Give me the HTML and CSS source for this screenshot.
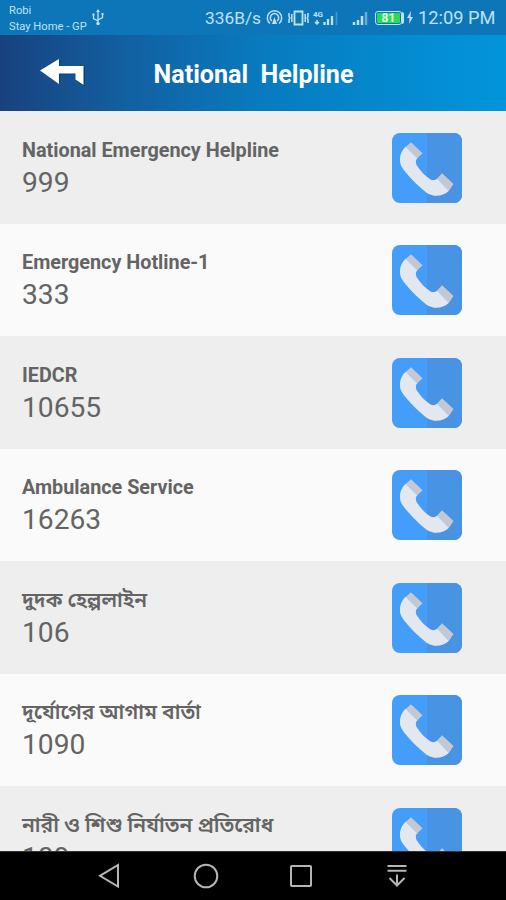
FILE: index.html
```
<!DOCTYPE html>
<html lang="en">
<head>
<meta charset="utf-8">
<title>National Helpline</title>
<link rel="stylesheet" href="styles.css">
</head>
<body>
<svg class="defs" width="0" height="0" aria-hidden="true">
  <symbol id="phone" viewBox="0 0 70 70">
    <rect width="70" height="70" rx="8" fill="#459dfa"/>
    <path d="M35 0h27a8 8 0 0 1 8 8v54a8 8 0 0 1-8 8H35z" fill="#4893e3"/>
    <path d="M14 13.500C8.500 18 6.500 26 9 32.500C12 39 27 54 35 60C42 64.500 51 63.500 57 57.700L45.300 45.500C43 47.500 41 47.500 38.500 46.500C33 43 28.500 38 24.500 32C23.500 29 23.500 27 25.500 25Z" fill="#e3e7ef"/>
    <path d="M19 9.300L30.500 20.300 25.200 25.500 13.700 14ZM50 40.300L61.500 51 57 57.700 45 45.700Z" fill="#c3c9d4"/>
  </symbol>
</svg>
<div class="screen">
  <header class="status">
    <div class="carrier"><span>Robi</span><span>Stay Home - GP</span></div>
    <svg class="usb" width="12" height="17" viewBox="0 0 12 17" fill="none" stroke="#bfe0f6" stroke-width="1.300"><path d="M6 2v12M1.500 6v3.500L6 12M10.500 5.500v3L6 11"/><path d="M6 0l2 3H4zM0.500 4.500h2v2h-2zM9.500 4h2v2h-2z" fill="#bfe0f6" stroke="none"/><circle cx="6" cy="14.500" r="1.700" fill="#bfe0f6" stroke="none"/></svg>
    <span class="speed">336B/s</span>
    <svg class="icons" width="74" height="18" viewBox="0 0 74 18" fill="none" stroke="#bfe0f6" stroke-width="1.500">
      <path d="M4 14.500A7.200 7.200 0 1 1 13 14.500M5.800 12A4.200 4.200 0 1 1 11.200 12"/><path d="M8.500 8l2.500 7H6z" fill="#bfe0f6" stroke="none"/>
      <path d="M28.500 2.500h8v13h-8z" stroke-width="1.800"/><path d="M25.800 5v8M39.200 5v8M23 4v3.500l.8 1.500-.8 1.500V14M42 4v3.500L41.200 9l.8 1.500V14"/>
      <path d="M58.500 13v3M62 10v6M66 7v9" stroke-width="2.300"/><path d="M70.500 3v13" stroke="#3f98d1" stroke-width="1.700"/>
      <path d="M51 11v4M49 13l2 2 2-2"/>
      <text x="47" y="8" class="tiny">4G</text>
    </svg>
    <svg class="signal" width="17" height="18" viewBox="0 0 17 18" fill="none" stroke="#bfe0f6" stroke-width="2.500"><path d="M2 13v3M6 11v5M10 7v9"/><path d="M14 3v13" stroke="#62aedd"/></svg>
    <div class="battery"><span>81</span></div>
    <svg class="bolt" width="6" height="13" viewBox="0 0 6 13"><path d="M4 0L0 7h2.500L2 13l4-7H3.500z" fill="#bfe0f6"/></svg>
    <span class="clock">12:09 PM</span>
  </header>
  <div class="toolbar">
    <svg class="back" width="50" height="34" viewBox="0 0 50 34"><path d="M4 15.500L23 3.500v7h25v20l-8-5v-7H23v8z" fill="#0a3c83"/><path d="M3 14.500L22 3v7h24.500v19l-8-5.500v-6H22V28z" fill="#fff"/></svg>
    <h1>National&nbsp; Helpline</h1>
  </div>
  <main class="list">
    <div class="row"><div><h2>National Emergency Helpline</h2><p>999</p></div><svg class="call"><use href="#phone"/></svg></div>
    <div class="row"><div><h2>Emergency Hotline-1</h2><p>333</p></div><svg class="call"><use href="#phone"/></svg></div>
    <div class="row"><div><h2>IEDCR</h2><p>10655</p></div><svg class="call"><use href="#phone"/></svg></div>
    <div class="row"><div><h2>Ambulance Service</h2><p>16263</p></div><svg class="call"><use href="#phone"/></svg></div>
    <div class="row"><div><h2 class="bn" lang="bn">দুদক হেল্পলাইন</h2><p>106</p></div><svg class="call"><use href="#phone"/></svg></div>
    <div class="row"><div><h2 class="bn" lang="bn">দূর্যোগের আগাম বার্তা</h2><p>1090</p></div><svg class="call"><use href="#phone"/></svg></div>
    <div class="row"><div><h2 class="bn" lang="bn">নারী ও শিশু নির্যাতন প্রতিরোধ</h2><p>109</p></div><svg class="call"><use href="#phone"/></svg></div>
  </main>
  <nav class="nav">
    <svg viewBox="0 0 28 28"><path d="M22 3v21.500L4 13.800z"/></svg>
    <svg viewBox="0 0 28 28"><circle cx="14" cy="14" r="11.300"/></svg>
    <svg viewBox="0 0 28 28"><rect x="4" y="4" width="20" height="20" rx="1"/></svg>
    <svg viewBox="0 0 28 28"><path d="M4.500 4h19M4.500 8.800h19M14 12.500V23M6.500 16l7.500 7.500 7.500-7.500"/></svg>
  </nav>
</div>
</body>
</html>
```
FILE: styles.css
```
* { box-sizing: border-box; margin: 0; padding: 0; }
body { font-family: Roboto, "Noto Sans", "Noto Sans Bengali", sans-serif; overflow: hidden; }
.defs { display: block; width: 0; height: 0; }
.screen { width: 506px; height: 900px; display: flex; flex-direction: column; overflow: hidden; }
.status { height: 35px; flex: none; display: flex; align-items: center; background: #0c76b8; color: #bfe0f6; padding-left: 9px; white-space: nowrap; }
.carrier { display: flex; flex-direction: column; width: 79px; font-size: 11.2px; line-height: 16px; padding-top: 3px; }
.usb { margin-left: 4px; }
.speed { width: 61px; margin-left: 101px; font-size: 17.3px; }
.tiny { font: bold 8px Roboto, sans-serif; fill: #bfe0f6; stroke: none; }
.icons { flex: none; }
.signal { margin-left: 12px; flex: none; }
.battery { flex: none; width: 27px; height: 14px; margin-left: 6px; border: 1px solid #bfe0f6; border-radius: 3px; padding: 1px; box-shadow: 3px 0 0 -1px #bfe0f6; }
.battery span { display: block; height: 10px; background: #27dc50; color: #e0ffe8; font-size: 12px; font-weight: 700; line-height: 10px; text-align: center; border-radius: 1px; }
.bolt { margin: 0 5px; flex: none; }
.clock { font-size: 18.3px; }
.toolbar { height: 76px; flex: none; display: flex; align-items: center; padding-left: 37px; background: linear-gradient(90deg, #18427e 0%, #1260a1 25%, #087bbf 52%, #0295db 100%); color: #fff; }
.back { margin-right: 66.500px; flex: none; }
h1 { font-size: 25.1px; font-weight: 700; white-space: pre; padding-top: 3px; }
.list { flex: 1; min-height: 0; overflow: hidden; }
.row { height: 112.5px; display: flex; align-items: flex-start; justify-content: space-between; padding: 21.500px 43.700px 0 22px; background: #fafafa; color: #646464; }
.row:nth-child(odd) { background: #eee; }
h2 { font-size: 19.8px; line-height: 36px; height: 34px; font-weight: 700; white-space: nowrap; }
h2.bn { font-size: 20.9px; font-weight: 600; line-height: 34px; }
p { font-size: 28.2px; line-height: 32px; }
.call { width: 70px; height: 70px; flex: none; }
.nav { height: 49.500px; flex: none; display: flex; justify-content: space-between; background: #000; border-top: 1px solid #333; padding: 10px 95px 0 96px; }
.nav svg { width: 28px; height: 28px; fill: none; stroke: #b5b5b5; stroke-width: 2; }
```
